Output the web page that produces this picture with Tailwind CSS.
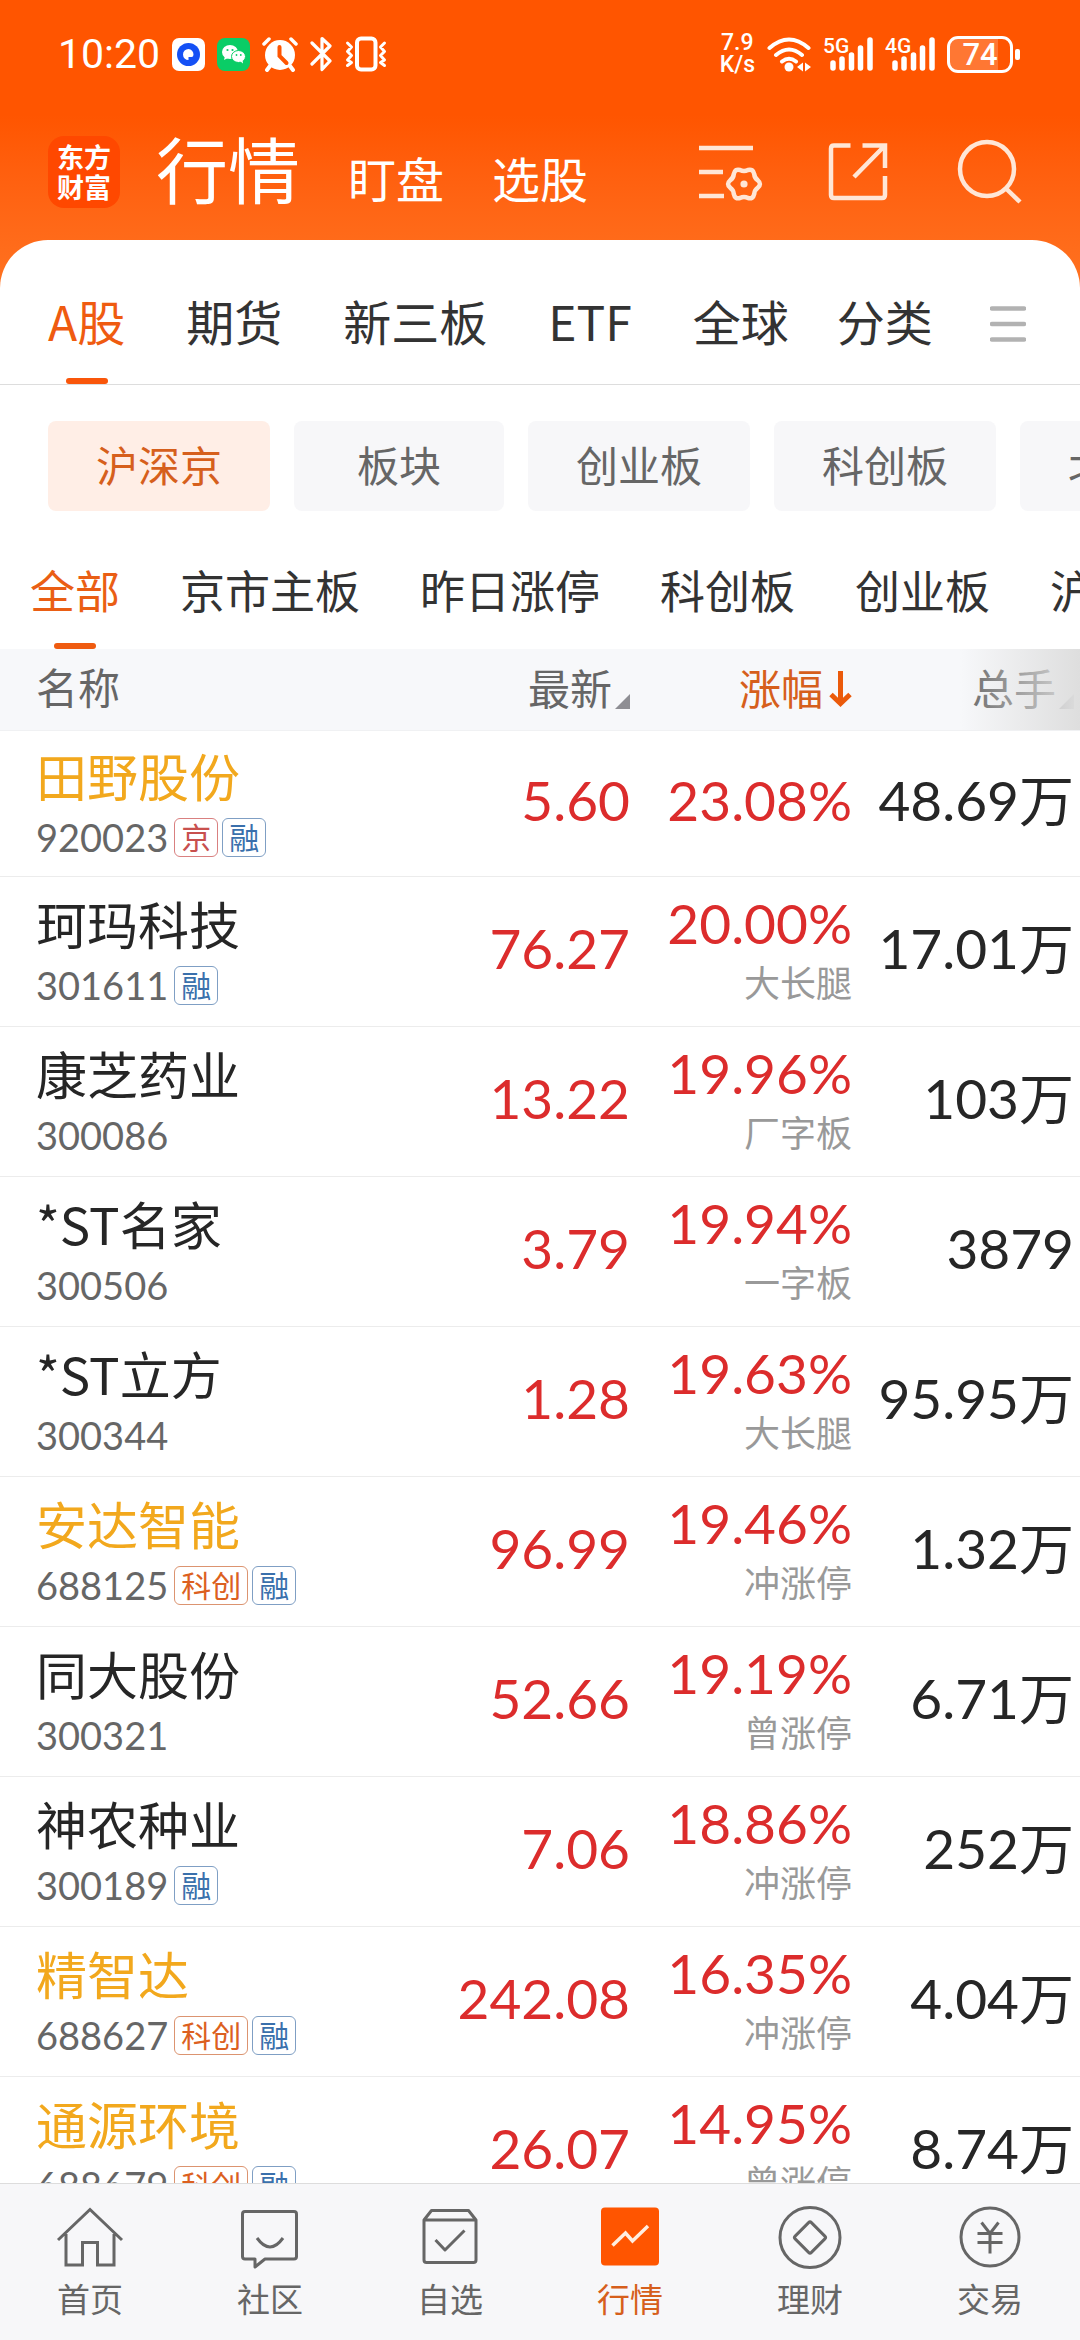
<!DOCTYPE html>
<html lang="zh-CN">

<head>
    <meta charset="UTF-8">
    <meta name="viewport" content="width=device-width, initial-scale=1.0">
    <script src="https://cdn.jsdelivr.net/npm/@tailwindcss/browser@4"></script>
    <title>行情</title>
</head>

<body class="h-screen flex flex-col overflow-hidden bg-white text-[#333] font-['Noto_Sans_CJK_SC',sans-serif]">

    <!-- orange header: status bar + app bar -->
    <header class="shrink-0 bg-linear-to-b from-[#ff5500] from-40% to-[#ff7220] text-white pb-12">
        <div class="h-[108px] pl-[58px] pr-[60px] flex items-center justify-between font-[Roboto,sans-serif]">
            <div class="flex items-center gap-3">
                <span class="text-[41px] leading-none">10:20</span>
                <svg class="w-[33px] h-[33px]" viewBox="0 0 33 33">
                    <rect width="33" height="33" rx="7" fill="#fff" />
                    <circle cx="16.500" cy="16.500" r="11.500" fill="#1450f5" />
                    <path d="M16.500 11a5.500 5.500 0 1 0 0 11v-3h3q2 0 2-2.500a5.500 5.500 0 0 0-5-5.500z" fill="#fff" />
                </svg>
                <svg class="w-[33px] h-[33px]" viewBox="0 0 33 33">
                    <rect width="33" height="33" rx="8" fill="#0acd66" />
                    <ellipse cx="13" cy="14" rx="8" ry="7" fill="#fff" />
                    <path d="M8 18l-1 4 4-2z" fill="#fff" />
                    <ellipse cx="21.500" cy="18.500" rx="7" ry="6" fill="#fff" stroke="#0acd66" />
                    <path d="M23 23l3 2.500-.5-3.500z" fill="#fff" />
                    <g fill="#0acd66">
                        <circle cx="10.500" cy="12" r="1.100" />
                        <circle cx="15.500" cy="12" r="1.100" />
                        <circle cx="19.500" cy="17" r="0.900" />
                        <circle cx="23.800" cy="17" r="0.900" />
                    </g>
                </svg>
                <svg class="w-9 h-9" viewBox="0 0 36 36" fill="none" stroke="#fff" stroke-linecap="round">
                    <circle cx="18" cy="19" r="15" fill="#fff" stroke="none" />
                    <path d="M2 8l5-5M34 8l-5-5" stroke-width="3.500" />
                    <path d="M8 30l-3 4M28 30l3 4" stroke-width="4" />
                    <path d="M17.500 11v9l7 7" stroke="#ff5500" stroke-width="4" />
                </svg>
                <svg class="w-[23px] h-9" viewBox="0 0 23 36" fill="none" stroke="#fff" stroke-width="3.200" stroke-linejoin="round" stroke-linecap="round">
                    <path d="M2 7l18 18-8 8.500V2.500L20 10 2 28" />
                </svg>
                <svg class="w-[42px] h-9" viewBox="0 0 42 36" fill="none" stroke="#fff">
                    <rect x="12" y="2.500" width="18.500" height="31" rx="4" stroke-width="4" />
                    <path d="M2.500 7l4 4-4 4.500 4 4-4 4.500 4 2.500-4 3M39.500 7l-4 4 4 4.500-4 4 4 4.500-4 2.500 4 3" stroke-width="3" stroke-linejoin="round" stroke-linecap="round" />
                </svg>
            </div>
            <div class="flex items-center gap-3">
                <div class="text-[23px] leading-[22px] font-medium text-center">
                    <div>7.9</div>
                    <div>K/s</div>
                </div>
                <svg class="w-11 h-9" viewBox="0 0 44 36" fill="none" stroke="#fff" stroke-width="4" stroke-linecap="round">
                    <path d="M2.500 12q19.500-17 39 0M9 19q13-11 26 0M15 25.500q7-5.500 14 0" />
                    <circle cx="22" cy="31" r="4.500" fill="#fff" stroke="none" />
                    <path d="M36 26.500v9l-6-4.500zM38 26.500v9l6-4.500z" fill="#fff" stroke="none" />
                </svg>
                <svg class="w-[50px] h-11" viewBox="0 -4 50 44">
                    <text x="0" y="17" font-size="21" font-weight="500" fill="#fff">5G</text>
                    <path d="M10 27v5M19 23v9M28.500 19v13M37.500 12v20M47 4v28" stroke="#fff" stroke-width="5.500" stroke-linecap="round" />
                </svg>
                <svg class="w-[50px] h-11" viewBox="0 -4 50 44">
                    <text x="0" y="17" font-size="21" font-weight="500" fill="#fff">4G</text>
                    <path d="M10 27v5M19 23v9M28.500 19v13M37.500 12v20M47 4v28" stroke="#fff" stroke-width="5.500" stroke-linecap="round" />
                </svg>
                <div class="flex items-center gap-[2px]">
                    <div class="w-[66px] h-[37px] border-3 border-white rounded-[11px] bg-linear-to-r from-white/20 from-80% to-transparent to-80% text-[31px] leading-[31px] font-medium text-center">74</div>
                    <div class="w-[5px] h-[11px] rounded-[2px] bg-white"></div>
                </div>
            </div>
        </div>

        <div class="h-[132px] pl-12 pr-[57px] pb-1 flex items-center justify-between">
            <div class="flex items-center gap-9">
                <div class="w-[72px] h-[72px] rounded-2xl bg-[#ff4800] flex items-center justify-center text-[27px] leading-[30px] font-bold">东方<br>财富</div>
                <nav class="flex items-baseline gap-12 text-[48px] leading-[72px]">
                    <a href="#" class="text-[72px]">行情</a>
                    <a href="#">盯盘</a>
                    <a href="#">选股</a>
                </nav>
            </div>
            <div class="flex gap-[63px]">
                <button aria-label="设置">
                    <svg class="block w-[66px] h-[66px]" viewBox="0 0 66 66" fill="none" stroke="#ffe6d6" stroke-width="4.500">
                        <path d="M0 9h54M0 33h24M0 57h25" />
                        <g transform="translate(45 45)">
                            <path d="M13.900-3.600Q18 0 13.900 3.600 10.500 6 10.200 10 9 15.500 4 14 0 12-4 14-9 15.500-10.200 10-10.500 6-13.900 3.600-18 0-13.900-3.600-10.500-6-10.200-10-9-15.500-4-14 0-12 4-14 9-15.500 10.200-10 10.500-6 13.900-3.600z" />
                            <circle r="3.600" fill="#ffe6d6" stroke="none" />
                        </g>
                    </svg>
                </button>
                <button aria-label="分享">
                    <svg class="block w-[66px] h-[66px]" viewBox="0 0 66 66" fill="none" stroke="#ffe6d6" stroke-width="4.500">
                        <path d="M22.500 6.500H6q-3 0-3 3V56q0 3 3 3h48q3 0 3-3V37" />
                        <path d="M34.500 6.500H57V29M56 7.500L26 38" />
                    </svg>
                </button>
                <button aria-label="搜索">
                    <svg class="block w-[66px] h-[66px]" viewBox="0 0 66 66" fill="none" stroke="#ffe6d6" stroke-width="4.500">
                        <circle cx="30" cy="30" r="27" />
                        <path d="M48.500 49L63 63" />
                    </svg>
                </button>
            </div>
        </div>
    </header>

    <main class="flex-1 min-h-0 overflow-hidden -mt-12 rounded-t-[48px] bg-white">
        <!-- market tabs -->
        <nav class="h-[145px] border-b border-[#ddd] pl-12 pr-[54px] flex text-[48px] leading-[72px] whitespace-nowrap">
            <div class="flex gap-[61px]">
                <a href="#" class="pt-11 flex flex-col justify-between items-center text-[#ef5b10]">A股<span class="w-[42px] h-[6px] rounded-full bg-[#f9560a]"></span></a>
                <a href="#" class="pt-11">期货</a>
                <a href="#" class="pt-11">新三板</a>
                <a href="#" class="pt-11">ETF</a>
                <a href="#" class="pt-11">全球</a>
            </div>
            <a href="#" class="pt-11 ml-12">分类</a>
            <button aria-label="更多" class="ml-auto pt-[66px] self-start">
                <svg class="block w-9 h-9" viewBox="0 0 36 36" stroke="#b2b2b2" stroke-width="4.500" stroke-linecap="round">
                    <path d="M2 2.500h32M2 18h32M2 33.500h32" />
                </svg>
            </button>
        </nav>

        <!-- board chips -->
        <div class="pt-9 pl-12 flex gap-6 overflow-hidden text-[42px] leading-[86px] text-[#666] whitespace-nowrap">
            <button class="shrink-0 px-12 pb-1 rounded-lg bg-[#ffeee6] text-[#d65f1c]">沪深京</button>
            <button class="shrink-0 w-[210px] pb-1 rounded-lg bg-[#f7f7f9]">板块</button>
            <button class="shrink-0 px-12 pb-1 rounded-lg bg-[#f7f7f9]">创业板</button>
            <button class="shrink-0 px-12 pb-1 rounded-lg bg-[#f7f7f9]">科创板</button>
            <button class="shrink-0 px-12 pb-1 rounded-lg bg-[#f7f7f9]">北交所</button>
        </div>

        <!-- sub tabs -->
        <nav class="h-[138px] pl-[30px] flex gap-[60px] overflow-hidden text-[45px] leading-[66px] whitespace-nowrap">
            <a href="#" class="shrink-0 pt-[46px] flex flex-col justify-between items-center text-[#ea5e14]">全部<span class="w-[42px] h-[6px] rounded-full bg-[#ef5b10]"></span></a>
            <a href="#" class="shrink-0 pt-[46px]">京市主板</a>
            <a href="#" class="shrink-0 pt-[46px]">昨日涨停</a>
            <a href="#" class="shrink-0 pt-[46px]">科创板</a>
            <a href="#" class="shrink-0 pt-[46px]">创业板</a>
            <a href="#" class="shrink-0 pt-[46px]">沪市主板</a>
        </nav>

        <table class="w-full table-fixed whitespace-nowrap">
            <thead class="bg-[#f7f8fa] text-[42px] leading-[60px] text-[#666]">
                <tr class="h-[81px] border-b border-[#f0f1f3]">
                    <th class="pl-9 pb-[6px] text-left font-normal">名称</th>
                    <th class="w-[230px] pb-1 font-normal">
                        <button class="w-full flex items-center justify-end gap-[3px]">最新
                            <svg class="w-[15px] h-[15px] mt-7" viewBox="0 0 15 15"><path d="M15 0v15H0z" fill="#8e8e93" /></svg>
                        </button>
                    </th>
                    <th class="w-[222px] pb-1 font-normal">
                        <button class="w-full flex items-center justify-end gap-[6px] text-[#d65f1c]">涨幅
                            <svg class="w-[23px] h-9 mt-1" viewBox="0 0 23 36" fill="none" stroke="#eb5a0a" stroke-width="5"><path d="M11.500 0v33M2 23.500l9.500 9 9.500-9" /></svg>
                        </button>
                    </th>
                    <th class="w-[228px] pr-[6px] pb-1 font-normal relative">
                        <button class="w-full flex items-center justify-end gap-[3px]">总手
                            <svg class="w-[15px] h-[15px] mt-7" viewBox="0 0 15 15"><path d="M15 0v15H0z" fill="#8e8e93" /></svg>
                        </button>
                        <!-- fade on the scroll edge -->
                        <div class="absolute inset-y-0 right-0 w-[120px] bg-linear-to-r from-[#f7f8fa]/0 to-[#dedede] pointer-events-none"></div>
                    </th>
                </tr>
            </thead>
            <tbody id="stocks" class="text-[55px] leading-[60px] text-right text-[#262626] font-[Lato,'Noto_Sans_CJK_SC',sans-serif]"></tbody>
        </table>
    </main>

    <!-- bottom nav -->
    <nav class="shrink-0 h-[157px] border-t border-[#ddd] bg-[#f7f7f9] pt-5 grid grid-cols-6 text-[33px] leading-9 text-[#666] text-center">
        <a href="#" class="flex flex-col items-center gap-2">
            <svg class="w-[72px] h-[68px]" viewBox="0 0 72 68" fill="none" stroke="#666" stroke-width="3">
                <path d="M4 36L36 5.500 68 36M12 30v31h16.500V38.500h15V61H60V30" />
            </svg>
            首页
        </a>
        <a href="#" class="flex flex-col items-center gap-2">
            <svg class="w-[72px] h-[68px]" viewBox="0 0 72 68" fill="none" stroke="#666" stroke-width="3">
                <path d="M11 7.500h49q2.500 0 2.500 2.500v42.500q0 2.500-2.500 2.500H31l-10 8v-8H11q-2.500 0-2.500-2.500V10q0-2.500 2.500-2.500z" stroke-linejoin="round" />
                <path d="M23 34q13 18 26 0" />
            </svg>
            社区
        </a>
        <a href="#" class="flex flex-col items-center gap-2">
            <svg class="w-[72px] h-[68px]" viewBox="0 0 72 68" fill="none" stroke="#666" stroke-width="3" stroke-linejoin="round">
                <path d="M10 16l7.500-9.500h37L62 16v40q0 2.500-2.500 2.500h-47Q10 58.500 10 56zM10 16h52M21.500 36l9.500 10 19.500-19.500" />
            </svg>
            自选
        </a>
        <a href="#" class="flex flex-col items-center gap-2 text-[#d65f1c]">
            <svg class="w-[72px] h-[68px]" viewBox="0 0 72 68" fill="none">
                <rect x="7" y="3.500" width="58" height="58" rx="4" fill="#ff5500" />
                <path d="M18.500 41.500L31.500 29l7 8 15.500-15" stroke="#ffeee0" stroke-width="3.500" />
            </svg>
            行情
        </a>
        <a href="#" class="flex flex-col items-center gap-2">
            <svg class="w-[72px] h-[68px]" viewBox="0 0 72 68" fill="none" stroke="#666" stroke-width="3">
                <circle cx="36" cy="33.500" r="30" />
                <rect x="24.500" y="22" width="23" height="23" rx="2" transform="rotate(45 36 33.500)" />
            </svg>
            理财
        </a>
        <a href="#" class="flex flex-col items-center gap-2">
            <svg class="w-[72px] h-[68px]" viewBox="0 0 72 68" fill="none" stroke="#666" stroke-width="3">
                <circle cx="36" cy="33" r="29" />
                <path d="M27.500 18.500L36 29.500l8.500-11M36 29v20.500M23.500 29.500h25M23.500 38.500h25" />
            </svg>
            交易
        </a>
    </nav>

    <script>
        // name, code, tags, price, change, note, volume, highlighted
        const stocks = [
            ['田野股份', '920023', ['京', '融'], '5.60', '23.08%', '', '48.69万', true],
            ['珂玛科技', '301611', ['融'], '76.27', '20.00%', '大长腿', '17.01万', false],
            ['康芝药业', '300086', [], '13.22', '19.96%', '厂字板', '103万', false],
            ['*ST名家', '300506', [], '3.79', '19.94%', '一字板', '3879', false],
            ['*ST立方', '300344', [], '1.28', '19.63%', '大长腿', '95.95万', false],
            ['安达智能', '688125', ['科创', '融'], '96.99', '19.46%', '冲涨停', '1.32万', true],
            ['同大股份', '300321', [], '52.66', '19.19%', '曾涨停', '6.71万', false],
            ['神农种业', '300189', ['融'], '7.06', '18.86%', '冲涨停', '252万', false],
            ['精智达', '688627', ['科创', '融'], '242.08', '16.35%', '冲涨停', '4.04万', true],
            ['通源环境', '688679', ['科创', '融'], '26.07', '14.95%', '曾涨停', '8.74万', true],
        ];

        const tagColors = {
            '京': 'text-[#c8504e] border-[#d98080]',
            '融': 'text-[#3a70ac] border-[#7f9fc4]',
            '科创': 'text-[#dc6020] border-[#dc9470]',
        };

        document.getElementById('stocks').innerHTML = stocks.map(([name, code, tags, price, change, note, volume, hot]) => `
            <tr class="h-[150px] first:h-[146px] border-b border-[#ececec]">
                <td class="pl-9 pb-1 text-left">
                    <div class="text-[51px] font-['Noto_Sans_CJK_SC',sans-serif] ${hot ? 'text-[#f2a81d]' : ''}">${name}</div>
                    <div class="mt-3 h-10 flex items-center gap-1 text-[38px] leading-10 text-[#666]">
                        <span class="mr-[2px]">${code}</span>
                        ${tags.map(tag => `<span class="px-[6px] border rounded-md text-[30px] leading-[37px] ${tagColors[tag]}">${tag}</span>`).join('')}
                    </div>
                </td>
                <td class="pb-[6px] text-[#dc2c2c]">${price}</td>
                <td class="pb-[6px] text-[#dc2c2c]">${change}${note ? `<div class="mt-[10px] text-[36px] leading-10 text-[#999]">${note}</div>` : ''}</td>
                <td class="pr-[6px] pb-[6px]">${volume}</td>
            </tr>`).join('');
    </script>
</body>

</html>
